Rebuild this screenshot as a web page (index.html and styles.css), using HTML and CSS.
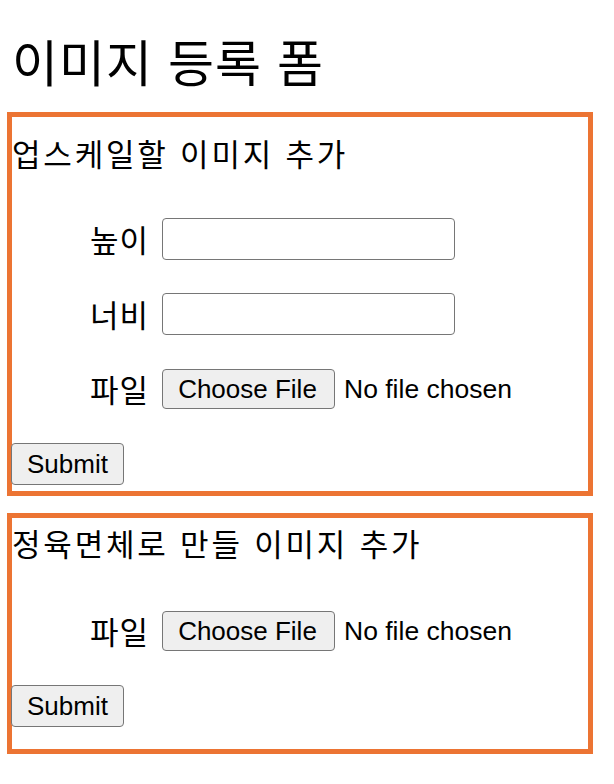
FILE: index.html
```html
<!DOCTYPE html>
<html lang="ko">
<head>
<meta charset="utf-8">
<title>이미지 등록 폼</title>
<link rel="stylesheet" href="styles.css">
</head>
<body>
<h1 class="title">이미지 등록 폼</h1>
<form class="panel panel-upscale">
  <p class="panel-title">업스케일할 이미지 추가</p>
  <div class="fields">
    <div class="row"><label class="label">높이</label><input class="text-input" type="text"></div>
    <div class="row"><label class="label">너비</label><input class="text-input" type="text"></div>
    <div class="row"><label class="label">파일</label><span class="file-btn">Choose File</span><span class="file-status">No file chosen</span></div>
  </div>
  <button class="submit" type="button">Submit</button>
</form>
<form class="panel panel-cube">
  <p class="panel-title">정육면체로 만들 이미지 추가</p>
  <div class="fields">
    <div class="row"><label class="label">파일</label><span class="file-btn">Choose File</span><span class="file-status">No file chosen</span></div>
  </div>
  <button class="submit" type="button">Submit</button>
</form>
</body>
</html>
```
FILE: styles.css
```css
html, body {
  margin: 0;
  padding: 0;
  background: #ffffff;
}
body {
  font-family: "Noto Sans CJK KR", "Noto Sans", sans-serif;
  color: #000;
}
.title {
  font-size: 50px;
  font-weight: 400;
  line-height: 60px;
  letter-spacing: 1px;
  margin: 30px 0 22px 12px;
}
.panel {
  box-sizing: border-box;
  width: 586px;
  margin-left: 7px;
  border: 5px solid #ec7433;
}
.panel-upscale {
  height: 384px;
}
.panel-cube {
  margin-top: 17px;
  height: 241px;
}
.panel-title {
  font-size: 31px;
  line-height: 40px;
  letter-spacing: 2.8px;
  margin: 16px 0 0 0;
}
.panel-cube .panel-title {
  margin-top: 5px;
}
.fields {
  display: flex;
  flex-direction: column;
  gap: 33px;
  margin-top: 45px;
}
.panel-cube .fields {
  margin-top: 47px;
}
.row {
  display: flex;
  align-items: center;
  height: 42px;
  padding-left: 78px;
}
.label {
  font-size: 31px;
  line-height: 42px;
  letter-spacing: 1px;
  width: 66px;
  margin-right: 6px;
}
.text-input {
  box-sizing: border-box;
  width: 293px;
  height: 42px;
  border: 1px solid #767676;
  border-radius: 4px;
  margin: 0;
  padding: 0;
  background: #fff;
}
.file-btn, .submit {
  box-sizing: border-box;
  display: inline-flex;
  align-items: center;
  justify-content: center;
  font-family: "Liberation Sans", Arial, sans-serif;
  font-size: 26px;
  color: #000;
  background: #efefef;
  border: 1px solid #767676;
  border-radius: 4px;
}
.file-btn {
  width: 173px;
  height: 40px;
  padding-right: 2px;
}
.file-status {
  font-family: "Liberation Sans", Arial, sans-serif;
  font-size: 26.5px;
  margin-left: 9px;
}
.submit {
  display: flex;
  width: 113px;
  height: 42px;
  margin: 33px 0 0 -1px;
  padding: 0;
}
```
